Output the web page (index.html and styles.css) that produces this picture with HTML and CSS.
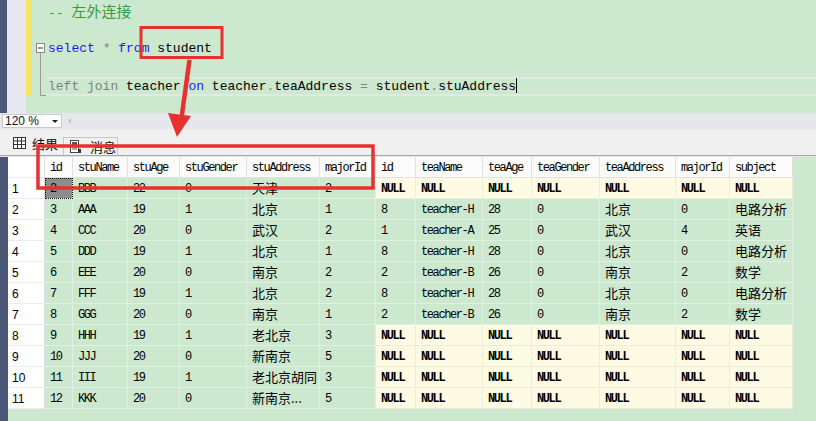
FILE: index.html
```html
<!DOCTYPE html>
<html>
<head>
<meta charset="utf-8">
<link rel="stylesheet" href="styles.css">
</head>
<body>
<div class="app">
  <div class="editor">
    <div class="edge"></div>
    <div class="gutter"></div>
    <div class="changebar"></div>
    <div class="margin">
      <svg width="15" height="113" viewBox="0 0 15 113">
        <rect x="4.5" y="43.5" width="8" height="9" fill="#fff" stroke="#8a8a8a"/>
        <line x1="6" y1="48" x2="11" y2="48" stroke="#333"/>
        <line x1="8.5" y1="53" x2="8.5" y2="95.5" stroke="#9a9a9a"/>
        <line x1="8.5" y1="95.5" x2="14" y2="95.5" stroke="#9a9a9a"/>
      </svg>
    </div>
    <div class="code">
      <div class="line comment">-- <span class="zh">左外连接</span></div>
      <div class="line"></div>
      <div class="line"><span class="kw">select</span> <span class="op">*</span> <span class="kw">from</span> student</div>
      <div class="line"></div>
      <div class="line current"><span class="op">left join</span> teacher <span class="kw">on</span> teacher<span class="op">.</span>teaAddress <span class="op">=</span> student<span class="op">.</span>stuAddress<span class="caret"></span></div>
    </div>
  </div>
  <div class="zoombar">
    <div class="zoombox"><span>120 %</span><span class="dd"></span></div>
    <span class="scrollarrow"></span>
  </div>
  <div class="tabs">
    <div class="tab active">
      <svg width="13" height="12" viewBox="0 0 13 12">
        <rect x="0.5" y="0.5" width="12" height="11" fill="#fff" stroke="#333"/>
        <line x1="0.5" y1="4" x2="12.5" y2="4" stroke="#333"/>
        <line x1="0.5" y1="7.5" x2="12.5" y2="7.5" stroke="#333"/>
        <line x1="4.5" y1="0.5" x2="4.5" y2="11.5" stroke="#333"/>
        <line x1="8.5" y1="0.5" x2="8.5" y2="11.5" stroke="#333"/>
      </svg>
      <span>结果</span>
    </div>
    <div class="tab msg">
      <svg width="11" height="13" viewBox="0 0 11 13">
        <rect x="0.5" y="0.5" width="8" height="12" fill="#fff" stroke="#444"/>
        <rect x="2" y="2" width="5" height="3" fill="#555"/>
        <line x1="2" y1="7" x2="7" y2="7" stroke="#555"/>
        <line x1="2" y1="9" x2="7" y2="9" stroke="#555"/>
        <rect x="8" y="9" width="3" height="4" fill="#333"/>
      </svg>
      <span>消息</span>
    </div>
  </div>
  <div class="results">
    <div class="edge"></div>
    <div class="grid">
      <div class="row"><div class="c h n"></div><div class="c h">id</div><div class="c h">stuName</div><div class="c h">stuAge</div><div class="c h">stuGender</div><div class="c h">stuAddress</div><div class="c h">majorId</div><div class="c h">id</div><div class="c h">teaName</div><div class="c h">teaAge</div><div class="c h">teaGender</div><div class="c h">teaAddress</div><div class="c h">majorId</div><div class="c h">subject</div></div>

      <div class="row"><div class="c n">1</div><div class="c g sel">2</div><div class="c g">BBB</div><div class="c g">22</div><div class="c g">0</div><div class="c g zh">天津</div><div class="c g">2</div><div class="c y">NULL</div><div class="c y">NULL</div><div class="c y">NULL</div><div class="c y">NULL</div><div class="c y">NULL</div><div class="c y">NULL</div><div class="c y">NULL</div></div>

      <div class="row"><div class="c n">2</div><div class="c g">3</div><div class="c g">AAA</div><div class="c g">19</div><div class="c g">1</div><div class="c g zh">北京</div><div class="c g">1</div><div class="c g">8</div><div class="c g">teacher-H</div><div class="c g">28</div><div class="c g">0</div><div class="c g zh">北京</div><div class="c g">0</div><div class="c g zh">电路分析</div></div>

      <div class="row"><div class="c n">3</div><div class="c g">4</div><div class="c g">CCC</div><div class="c g">20</div><div class="c g">0</div><div class="c g zh">武汉</div><div class="c g">2</div><div class="c g">1</div><div class="c g">teacher-A</div><div class="c g">25</div><div class="c g">0</div><div class="c g zh">武汉</div><div class="c g">4</div><div class="c g zh">英语</div></div>

      <div class="row"><div class="c n">4</div><div class="c g">5</div><div class="c g">DDD</div><div class="c g">19</div><div class="c g">1</div><div class="c g zh">北京</div><div class="c g">1</div><div class="c g">8</div><div class="c g">teacher-H</div><div class="c g">28</div><div class="c g">0</div><div class="c g zh">北京</div><div class="c g">0</div><div class="c g zh">电路分析</div></div>

      <div class="row"><div class="c n">5</div><div class="c g">6</div><div class="c g">EEE</div><div class="c g">20</div><div class="c g">0</div><div class="c g zh">南京</div><div class="c g">2</div><div class="c g">2</div><div class="c g">teacher-B</div><div class="c g">26</div><div class="c g">0</div><div class="c g zh">南京</div><div class="c g">2</div><div class="c g zh">数学</div></div>

      <div class="row"><div class="c n">6</div><div class="c g">7</div><div class="c g">FFF</div><div class="c g">19</div><div class="c g">1</div><div class="c g zh">北京</div><div class="c g">2</div><div class="c g">8</div><div class="c g">teacher-H</div><div class="c g">28</div><div class="c g">0</div><div class="c g zh">北京</div><div class="c g">0</div><div class="c g zh">电路分析</div></div>

      <div class="row"><div class="c n">7</div><div class="c g">8</div><div class="c g">GGG</div><div class="c g">20</div><div class="c g">0</div><div class="c g zh">南京</div><div class="c g">1</div><div class="c g">2</div><div class="c g">teacher-B</div><div class="c g">26</div><div class="c g">0</div><div class="c g zh">南京</div><div class="c g">2</div><div class="c g zh">数学</div></div>

      <div class="row"><div class="c n">8</div><div class="c g">9</div><div class="c g">HHH</div><div class="c g">19</div><div class="c g">1</div><div class="c g zh">老北京</div><div class="c g">3</div><div class="c y">NULL</div><div class="c y">NULL</div><div class="c y">NULL</div><div class="c y">NULL</div><div class="c y">NULL</div><div class="c y">NULL</div><div class="c y">NULL</div></div>

      <div class="row"><div class="c n">9</div><div class="c g">10</div><div class="c g">JJJ</div><div class="c g">20</div><div class="c g">0</div><div class="c g zh">新南京</div><div class="c g">5</div><div class="c y">NULL</div><div class="c y">NULL</div><div class="c y">NULL</div><div class="c y">NULL</div><div class="c y">NULL</div><div class="c y">NULL</div><div class="c y">NULL</div></div>

      <div class="row"><div class="c n">10</div><div class="c g">11</div><div class="c g">III</div><div class="c g">19</div><div class="c g">1</div><div class="c g zh">老北京胡同</div><div class="c g">3</div><div class="c y">NULL</div><div class="c y">NULL</div><div class="c y">NULL</div><div class="c y">NULL</div><div class="c y">NULL</div><div class="c y">NULL</div><div class="c y">NULL</div></div>

      <div class="row"><div class="c n">11</div><div class="c g">12</div><div class="c g">KKK</div><div class="c g">20</div><div class="c g">0</div><div class="c g zh">新南京...</div><div class="c g">5</div><div class="c y">NULL</div><div class="c y">NULL</div><div class="c y">NULL</div><div class="c y">NULL</div><div class="c y">NULL</div><div class="c y">NULL</div><div class="c y">NULL</div></div>
    </div>
  </div>
  <svg class="annot" width="816" height="421" viewBox="0 0 816 421">
    <rect x="141" y="27.5" width="81" height="30" fill="none" stroke="#e8312f" stroke-width="3"/>
    <rect x="38" y="146" width="335" height="42" fill="none" stroke="#e8312f" stroke-width="3.5"/>
    <line x1="189.5" y1="60" x2="181.5" y2="118" stroke="#e8312f" stroke-width="4.5"/>
    <polygon points="168,113 191,116 177,137" fill="#e8312f"/>
  </svg>
</div>
</body>
</html>
```
FILE: styles.css
```css
html, body {
  margin: 0;
  padding: 0;
}
body {
  width: 816px;
  height: 421px;
  overflow: hidden;
  background: #cce8cf;
  font-family: "Liberation Sans", "Noto Sans CJK SC", sans-serif;
}
.app {
  position: relative;
  width: 816px;
  height: 421px;
  display: flex;
  flex-direction: column;
}
.edge {
  width: 7px;
  flex: none;
  background: #4b5878;
}
.editor {
  height: 113px;
  flex: none;
  display: flex;
  background: #cce8cf;
}
.gutter {
  width: 19px;
  flex: none;
  background: #e7e8ef;
}
.changebar {
  width: 6px;
  height: 96px;
  flex: none;
  background: #f4e45e;
}
.margin {
  width: 15px;
  flex: none;
}
.margin svg {
  display: block;
}
.code {
  flex: 1;
  padding-top: 1px;
  font-family: "Liberation Mono", "Noto Sans CJK SC", monospace;
  font-size: 13px;
  color: #000;
}
.line {
  height: 19px;
  line-height: 19px;
  padding-left: 1px;
  white-space: pre;
}
.line .zh {
  font-family: "Noto Sans CJK SC", sans-serif;
  font-size: 15px;
  line-height: 19px;
}
.comment {
  color: #3d9a3d;
}
.kw {
  color: #1a1aff;
}
.op {
  color: #808080;
}
.current {
  box-shadow: inset 0 2px 0 #e1e9e2, inset 0 -2px 0 #e1e9e2;
}
.caret {
  display: inline-block;
  width: 1px;
  height: 15px;
  background: #000;
  vertical-align: -3px;
}
.zoombar {
  height: 16px;
  flex: none;
  display: flex;
  align-items: center;
  background: #e6e6ec;
}
.zoombox {
  margin-left: 2px;
  width: 60px;
  height: 14px;
  box-sizing: border-box;
  border: 1px solid #c9c9d0;
  background: #fff;
  display: flex;
  align-items: center;
  justify-content: space-between;
  padding: 0 3px 0 2px;
  font-size: 12px;
  color: #111;
}
.dd {
  width: 0;
  height: 0;
  border-left: 3px solid transparent;
  border-right: 3px solid transparent;
  border-top: 3px solid #222;
}
.scrollarrow {
  margin-left: 6px;
  width: 0;
  height: 0;
  border-top: 3px solid transparent;
  border-bottom: 3px solid transparent;
  border-right: 3px solid #c4c4c8;
}
.tabs {
  height: 26px;
  flex: none;
  display: flex;
  align-items: flex-end;
  background: #f0f0f0;
  border-bottom: 1px solid #a8a8a8;
}
.tab {
  display: flex;
  align-items: center;
  gap: 6px;
  font-size: 13px;
  color: #111;
  font-family: "Noto Sans CJK SC", sans-serif;
}
.tab svg {
  display: block;
}
.tab.active {
  height: 26px;
  padding-left: 13px;
  padding-top: 2px;
  box-sizing: border-box;
  width: 63px;
}
.tab.msg {
  height: 18px;
  width: 55px;
  box-sizing: border-box;
  border: 1px solid #c6c6c6;
  border-bottom: none;
  padding-left: 6px;
  gap: 9px;
}
.results {
  flex: 1;
  display: flex;
  border-top: 1px solid #e4e4e4;
  background: #cce8cf;
}
.results .edge {
  width: 8px;
}
.grid {
  display: grid;
  grid-template-columns: 37px 28px 55px 52px 67px 73px 56px 40px 67px 49px 68px 76px 54px 63px;
  grid-auto-rows: 21px;
  align-content: start;
}
.row {
  display: contents;
}
.c {
  box-sizing: border-box;
  display: flex;
  align-items: center;
  padding-left: 5px;
  padding-top: 1px;
  white-space: nowrap;
  overflow: hidden;
  font-family: "Liberation Mono", "Noto Sans CJK SC", monospace;
  font-size: 12px;
  letter-spacing: -1.4px;
  color: #000;
  border-right: 1px solid #e2efe3;
  border-bottom: 1px solid #e2efe3;
}
.c.h {
  background: #fbfbfb;
  border-right-color: #e1e1e1;
  border-bottom-color: #e1e1e1;
}
.c.n {
  background: #fff;
  padding-left: 4px;
  font-family: "Liberation Sans", sans-serif;
  font-size: 12px;
  letter-spacing: 0;
  border-right-color: #dcdcdc;
  border-bottom-color: #ececec;
}
.c.g {
  background: #cce8cf;
}
.c.y {
  background: #fdfbe4;
  font-weight: bold;
  border-right-color: #eeecd6;
  border-bottom-color: #eeecd6;
}
.c.zh {
  font-family: "Noto Sans CJK SC", sans-serif;
  font-size: 13px;
  letter-spacing: 0;
  padding-top: 0;
  padding-bottom: 2px;
}
.c.sel {
  background: #8d8d8d;
  outline: 1px dotted #111;
  outline-offset: -1px;
}
.annot {
  position: absolute;
  left: 0;
  top: 0;
  pointer-events: none;
}
```
